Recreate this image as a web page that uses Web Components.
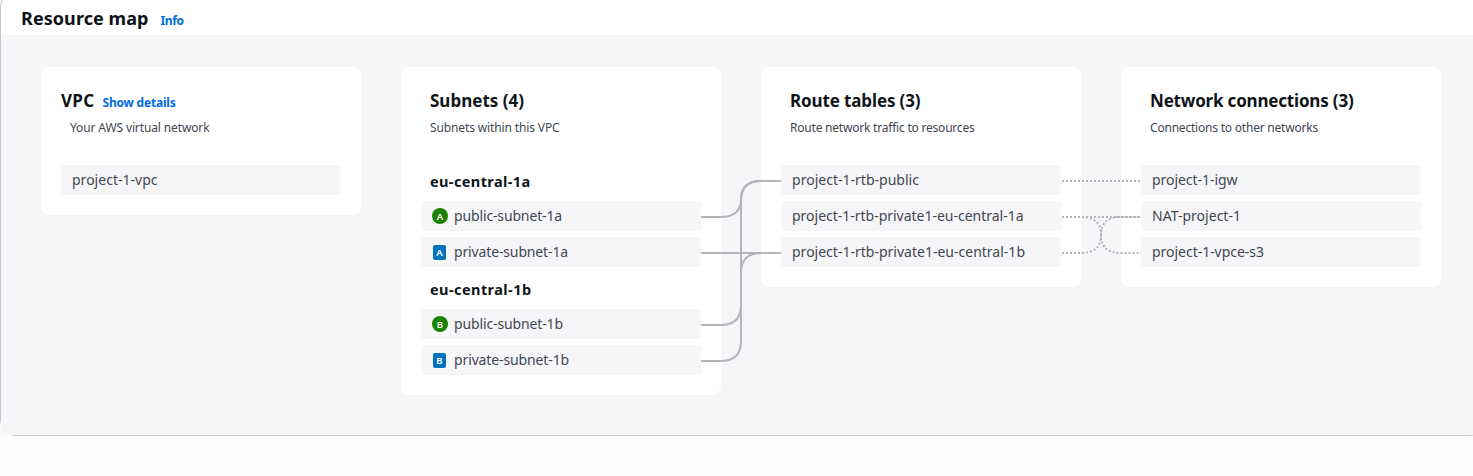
<!DOCTYPE html>
<html lang="en">
<head>
<meta charset="utf-8">
<title>Resource map</title>
<style>
  html, body { margin: 0; height: 476px; overflow: hidden; background: #fcfcfd; }
  body { font-family: "Noto Sans", "Open Sans", sans-serif; color: #0f141a; }
</style>
</head>
<body>
<resource-map></resource-map>
<script>
// A single line of text whose tracking is adjusted so that it fills a given width.
class FitText extends HTMLElement {
  connectedCallback() {
    const root = this.attachShadow({ mode: 'open' });
    root.innerHTML = `<style>
      :host { display: inline-block; white-space: nowrap; }
      span { display: inline-block; }
    </style><span><slot></slot></span>`;
    const span = root.querySelector('span');
    const target = parseFloat(this.getAttribute('width')) - 1;
    const count = this.textContent.length;
    if (target) {
      span.style.letterSpacing = ((target - span.getBoundingClientRect().width) / count).toFixed(3) + 'px';
    }
  }
}

class MapBadge extends HTMLElement {
  connectedCallback() {
    this.attachShadow({ mode: 'open' }).innerHTML = `<style>
      :host { display: flex; align-items: center; justify-content: center; box-sizing: border-box;
        width: 13px; height: 15px; margin: 0 2px 0 1px; border-radius: 2px; background: #0073bb;
        color: #fff; font: 600 9.5px/15px "Noto Sans", sans-serif; }
      :host([kind="public"]) { width: 16px; height: 16px; margin: 0; border-radius: 50%; background: #1d8102; }
    </style><slot></slot>`;
  }
}

class MapRow extends HTMLElement {
  connectedCallback() {
    const badge = this.getAttribute('badge');
    const kind = this.getAttribute('kind');
    this.attachShadow({ mode: 'open' }).innerHTML = `<style>
      :host { display: flex; align-items: center; gap: 6px; box-sizing: border-box; height: 30px;
        padding: 0 11px; border-radius: 2px; background: #f6f6f9; color: #424650;
        font-size: 14px; line-height: 30px; }
      fit-text { height: 30px; }
    </style>${badge ? `<map-badge kind="${kind}">${badge}</map-badge>` : ''}<fit-text width="${this.getAttribute('width')}">${this.getAttribute('label')}</fit-text>`;
  }
}

class MapZone extends HTMLElement {
  connectedCallback() {
    this.attachShadow({ mode: 'open' }).innerHTML = `<style>
      :host { display: block; height: 30px; padding-left: 9px; font-size: 14.5px; font-weight: 700; line-height: 32px; }
    </style><fit-text width="${this.getAttribute('width')}">${this.getAttribute('label')}</fit-text>`;
  }
}

class MapCard extends HTMLElement {
  connectedCallback() {
    this.attachShadow({ mode: 'open' }).innerHTML = `<style>
      :host { display: block; box-sizing: border-box; width: 320px; padding: 20px; border-radius: 8px; background: #fff; }
      .title { display: flex; align-items: baseline; gap: 8px; height: 28px; padding-left: var(--indent, 9px);
        font-size: 17px; font-weight: 700; line-height: 28px; }
      .sub { height: 24px; padding-left: 9px; margin-bottom: 26px; font-size: 12px; line-height: 26px; color: #424650; }
      .rows { display: flex; flex-direction: column; gap: 6px; }
    </style>
    <div class="title"><fit-text width="${this.getAttribute('title-width')}">${this.getAttribute('heading')}</fit-text><slot name="action"></slot></div>
    <div class="sub"><fit-text width="${this.getAttribute('sub-width')}">${this.getAttribute('description')}</fit-text></div>
    <div class="rows"><slot></slot></div>`;
  }
}

class MapLink extends HTMLElement {
  connectedCallback() {
    this.attachShadow({ mode: 'open' }).innerHTML = `<style>
      :host { display: inline-block; color: #006ce0; font-size: 12px; font-weight: 700; }
    </style><fit-text width="${this.getAttribute('width')}">${this.getAttribute('label')}</fit-text>`;
  }
}

// Curved connectors between rows of neighbouring columns, laid over the canvas.
class MapWires extends HTMLElement {
  connectedCallback() {
    this.attachShadow({ mode: 'open' }).innerHTML = `<style>
      :host { position: absolute; inset: 0; pointer-events: none; }
      svg { display: block; }
      path { fill: none; stroke: #b4b4bb; stroke-width: 2; }
      .dotted path { stroke-dasharray: 2 2; stroke-dashoffset: -1; }
    </style>
    <svg width="1472" height="400" viewBox="1 35 1472 400">
      <path d="M701 217H721Q741 217 741 199Q741 181 761 181H781"/>
      <path d="M701 325H721Q741 325 741 305V201Q741 181 761 181H781"/>
      <path d="M701 253H781"/>
      <path d="M701 361H721Q741 361 741 341V273Q741 253 761 253H781"/>
      <g class="dotted">
        <path d="M1061 181H1141"/>
        <path d="M1061 217H1141"/>
        <path d="M1061 217H1081Q1101 217 1101 235Q1101 253 1121 253H1141"/>
        <path d="M1061 253H1081Q1101 253 1101 235Q1101 217 1121 217H1141"/>
      </g>
    </svg>`;
  }
}

class ResourceMap extends HTMLElement {
  connectedCallback() {
    this.attachShadow({ mode: 'open' }).innerHTML = `<style>
      :host { display: block; box-sizing: border-box; width: 1486px; height: 445px; margin-top: -9px;
        padding-top: 8px; border: 1px solid #c6c6cd; border-radius: 16px; background: #fff; }
      header { display: flex; align-items: baseline; gap: 12px; height: 35px; padding-left: 20px;
        font-size: 18px; font-weight: 700; line-height: 36px; }
      .canvas { position: relative; display: flex; align-items: flex-start; gap: 40px; box-sizing: border-box;
        height: 400px; padding: 32px 40px; background: #f6f6f9; }
      map-card { flex: none; }
    </style>
    <header><fit-text width="128.5">Resource map</fit-text><map-link label="Info" width="24"></map-link></header>
    <div class="canvas">
      <map-card style="--indent:0px" heading="VPC" title-width="34.5" description="Your AWS virtual network" sub-width="140.5">
        <map-link slot="action" label="Show details" width="74"></map-link>
        <map-row label="project-1-vpc" width="86.5"></map-row>
      </map-card>
      <map-card heading="Subnets (4)" title-width="95" description="Subnets within this VPC" sub-width="130.5">
        <map-zone label="eu-central-1a" width="101.5"></map-zone>
        <map-row badge="A" kind="public" label="public-subnet-1a" width="109"></map-row>
        <map-row badge="A" kind="private" label="private-subnet-1a" width="115"></map-row>
        <map-zone label="eu-central-1b" width="102.5"></map-zone>
        <map-row badge="B" kind="public" label="public-subnet-1b" width="110"></map-row>
        <map-row badge="B" kind="private" label="private-subnet-1b" width="116"></map-row>
      </map-card>
      <map-card heading="Route tables (3)" title-width="131.5" description="Route network traffic to resources" sub-width="185.5">
        <map-row label="project-1-rtb-public" width="128"></map-row>
        <map-row label="project-1-rtb-private1-eu-central-1a" width="232.5"></map-row>
        <map-row label="project-1-rtb-private1-eu-central-1b" width="234"></map-row>
      </map-card>
      <map-card heading="Network connections (3)" title-width="204.5" description="Connections to other networks" sub-width="169">
        <map-row label="project-1-igw" width="86.5"></map-row>
        <map-row label="NAT-project-1" width="90"></map-row>
        <map-row label="project-1-vpce-s3" width="113"></map-row>
      </map-card>
      <map-wires></map-wires>
    </div>`;
  }
}

customElements.define('fit-text', FitText);
customElements.define('map-badge', MapBadge);
customElements.define('map-link', MapLink);
customElements.define('map-row', MapRow);
customElements.define('map-zone', MapZone);
customElements.define('map-card', MapCard);
customElements.define('map-wires', MapWires);
customElements.define('resource-map', ResourceMap);
</script>
</body>
</html>
